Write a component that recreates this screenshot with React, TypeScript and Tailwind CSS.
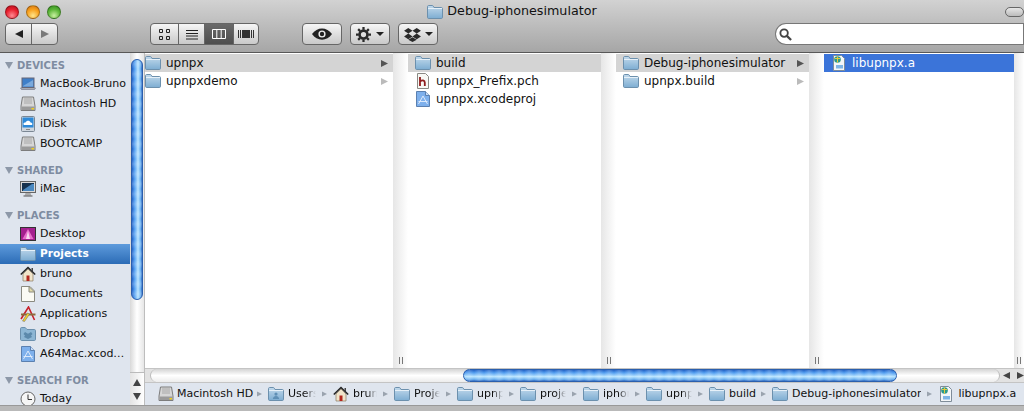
import React, { useId } from "react";

const FONT = "font-['DejaVu_Sans',sans-serif]";

function Folder({ className = "w-4 h-[14px]", person }: { className?: string; person?: boolean }) {
  const id = useId();
  return (
    <svg viewBox="0 0 16 14" className={`${className} shrink-0`}>
      <defs>
        <linearGradient id={id} x1="0" y1="0" x2="0" y2="1">
          <stop offset="0" stopColor="#c3daec" />
          <stop offset="1" stopColor="#7dadd2" />
        </linearGradient>
      </defs>
      <path d="M.5 3V1.600C.5 1 1 .5 1.600.5h3.600c.5 0 .8.2 1 .6L7 2.500h7.400c.6 0 1.100.5 1.100 1.100v8.800c0 .6-.5 1.100-1.100 1.100H1.600c-.6 0-1.100-.5-1.100-1.100z" fill={`url(#${id})`} stroke="#6c90ad" />
      <path d="M1 3.500h14" stroke="#e6f0f8" />
      {person && <path d="M8 5.500a1.600 1.600 0 110 3.200 1.600 1.600 0 010-3.200zM4.800 12c.3-2 1.600-3 3.200-3s2.900 1 3.200 3z" fill="#5f8fb5" />}
    </svg>
  );
}

function Drive() {
  return (
    <svg viewBox="0 0 16 16" className="w-4 h-4 shrink-0">
      <path d="M2.500 1h11l1.500 9v4.500H1V10z" fill="#d6d6d6" stroke="#7c7c7c" />
      <path d="M4 3h8M4 5h8M4 7h8" stroke="#a8a8a8" />
      <rect x="1.500" y="10.500" width="13" height="3.500" fill="#9a9a9a" />
      <rect x="11.500" y="12" width="2.500" height="1.500" fill="#f0d020" />
    </svg>
  );
}

function Laptop() {
  return (
    <svg viewBox="0 0 16 16" className="w-4 h-4 shrink-0">
      <rect x="2" y="2" width="12" height="9.500" fill="#3f7fc9" stroke="#667" />
      <path d="M3 10L13 4v6.500H3z" fill="#7aa9dd" />
      <path d="M.5 12h15l-1 1.500h-13z" fill="#c4c8ce" stroke="#667" strokeWidth=".6" />
    </svg>
  );
}

function IDisk() {
  return (
    <svg viewBox="0 0 16 16" className="w-4 h-4 shrink-0">
      <rect x="1.500" y=".5" width="13" height="15" rx="1" fill="#cfd6de" stroke="#7b8794" />
      <rect x="2.500" y="1.500" width="11" height="10" fill="#2f8ad8" />
      <path d="M4 9c-1.500-1.500.5-3 1.500-2.500C6.500 4 10 4 10.500 6.500 12.500 6.500 13 9 11.500 9z" fill="#fff" />
      <rect x="6" y="13" width="4" height="1" fill="#888" />
    </svg>
  );
}

function IMac() {
  return (
    <svg viewBox="0 0 16 16" className="w-4 h-4 shrink-0">
      <rect x=".5" y=".5" width="15" height="11" fill="#d9d9d9" stroke="#666" />
      <rect x="2" y="2" width="12" height="8" fill="#16324f" />
      <path d="M3 9l9-6h2v7H3z" fill="#4a88c0" />
      <path d="M5.500 12h5l.8 2.500H4.700z" fill="#aaa" />
      <rect x="3.500" y="14.500" width="9" height="1" fill="#555" />
    </svg>
  );
}

function DesktopIcon() {
  return (
    <svg viewBox="0 0 16 16" className="w-4 h-4 shrink-0">
      <rect x=".5" y="1.500" width="15" height="13" fill="#a5208f" stroke="#333" />
      <path d="M8 3l5.500 10h-11z" fill="#e86ccb" />
      <path d="M8 5l2 8H6z" fill="#f8d8f0" />
    </svg>
  );
}

function House() {
  return (
    <svg viewBox="0 0 16 16" className="w-4 h-4 shrink-0">
      <path d="M3 8v7h10V8L8 3z" fill="#f0e4ca" stroke="#8a7a60" strokeWidth=".7" />
      <path d="M.8 8.500L8 1.500l7.200 7" fill="none" stroke="#222" strokeWidth="1.500" />
      <rect x="6.500" y="9.500" width="3" height="5.500" fill="#b3261e" />
      <rect x="11.500" y="2" width="1.500" height="3" fill="#444" />
    </svg>
  );
}

function Doc() {
  return (
    <svg viewBox="0 0 16 16" className="w-4 h-4 shrink-0">
      <path d="M1.500.5h8.500l4.500 4.500v10.500h-13z" fill="#fbfbf4" stroke="#8a8a80" />
      <path d="M9 .5v5.500h5.500z" fill="#e4dca8" stroke="#8a8a80" />
    </svg>
  );
}

function Apps() {
  return (
    <svg viewBox="0 0 16 16" className="w-4 h-4 shrink-0">
      <path d="M1 13L8.500 1l6 13" fill="none" stroke="#c8202a" strokeWidth="1.600" />
      <path d="M1 8.500h14.500" stroke="#8a6a3c" strokeWidth="2" />
      <path d="M2.500 15l5-8 2 1.200-5 7.300z" fill="#f2cf2e" stroke="#666" strokeWidth=".5" />
    </svg>
  );
}

function DropboxFolder() {
  return (
    <svg viewBox="0 0 16 14" className="w-4 h-[14px] shrink-0">
      <path d="M.5 3V1.600C.5 1 1 .5 1.600.5h3.600L7 2.500h7.400c.6 0 1.100.5 1.100 1.100v8.800c0 .6-.5 1.100-1.100 1.100H1.600c-.6 0-1.100-.5-1.100-1.100z" fill="#8db6d4" stroke="#6c90ad" />
      <path d="M5 5l3 1.800L11 5l1.500 2L11 8.500l1 1.500-4 2-4-2 1-1.500L3.500 7z" fill="#5c89ab" />
    </svg>
  );
}

function Xcode() {
  return (
    <svg viewBox="0 0 16 16" className="w-4 h-4 shrink-0">
      <path d="M1.500.5h9l4 4v11h-13z" fill="#7eb0ec" stroke="#5b80b0" />
      <path d="M10.500.5v4h4" fill="#c8dcf5" stroke="#5b80b0" />
      <path d="M3.500 13L8 5l4.500 8M3.500 10.500h9" fill="none" stroke="#dce9fb" strokeWidth="1" />
    </svg>
  );
}

function HFile() {
  return (
    <svg viewBox="0 0 16 16" className="w-4 h-4 shrink-0">
      <path d="M2.500.5h8l3 3v12h-11z" fill="#f8f8f4" stroke="#8a8a84" />
      <path d="M5 4v9M5 8.500c2-1.500 4.800-1.500 4.800 1V13" fill="none" stroke="#8f1d1d" strokeWidth="1.800" />
    </svg>
  );
}

function LibFile() {
  return (
    <svg viewBox="0 0 16 16" className="w-4 h-4 shrink-0">
      <path d="M2.500.5h8l3 3v12h-11z" fill="#f4f6f8" stroke="#7f8c99" />
      <rect x="5" y="10" width="7" height="3.500" fill="#7db4e6" />
      <circle cx="6.500" cy="4.500" r="3.300" fill="#2d9a8c" />
      <path d="M6.500 1.500v6M4 3.500h5" stroke="#e6c83a" strokeWidth="1" />
    </svg>
  );
}

function Clock() {
  return (
    <svg viewBox="0 0 16 16" className="w-4 h-4 shrink-0">
      <circle cx="8" cy="8" r="7" fill="#f6f6f6" stroke="#666" />
      <path d="M8 3.500V8.500H12" fill="none" stroke="#333" strokeWidth="1" />
    </svg>
  );
}

function Triangle({ className, fill }: { className: string; fill: string }) {
  return (
    <svg viewBox="0 0 8 8" className={className}>
      <path d="M0 0L8 4L0 8z" fill={fill} />
    </svg>
  );
}

function Light({ gradient }: { gradient: string }) {
  return <div className={`w-[14px] h-[14px] rounded-full border border-black/30 ${gradient}`} />;
}

const btn =
  "h-[22px] border border-[#666] rounded-[4px] bg-gradient-to-b from-[#f6f6f6] to-[#c9c9c9] flex items-center justify-center";

function Toolbar() {
  return (
    <div className="h-[53px] shrink-0 bg-gradient-to-b from-[#d2d2d2] to-[#a6a6a6] border-b border-[#585858] flex flex-col">
      <div className="h-[23px] grid grid-cols-[1fr_auto_1fr] items-center shrink-0">
        <div className="flex gap-[7px] pl-[5px]">
          <Light gradient="bg-[radial-gradient(circle_at_50%_80%,#ff8a92,#e8202e_55%,#b00e1a)]" />
          <Light gradient="bg-[radial-gradient(circle_at_50%_80%,#ffe48a,#f8a01c_55%,#d0700e)]" />
          <Light gradient="bg-[radial-gradient(circle_at_50%_80%,#c8f0a0,#5cb638_55%,#2f8a1c)]" />
        </div>
        <div className="flex items-center gap-1 text-[12.7px] text-[#111] leading-none">
          <Folder />
          <span>Debug-iphonesimulator</span>
        </div>
        <div className="flex justify-end">
          <div className="w-[19px] h-[10px] rounded-full border border-[#666] bg-gradient-to-b from-[#e6e6e6] to-[#bbb]" />
        </div>
      </div>
      <div className="flex items-center pl-[5px]">
        <div className={`${btn} w-[53px]`}>
          <div className="w-[26px] h-full flex items-center justify-center border-r border-[#666]">
            <Triangle className="w-2 h-2 rotate-180" fill="#222" />
          </div>
          <div className="flex-1 flex items-center justify-center">
            <Triangle className="w-2 h-2" fill="#7a7a7a" />
          </div>
        </div>
        <div className={`${btn} w-[109px] ml-[92px] overflow-hidden`}>
          <div className="w-[28px] h-full flex items-center justify-center border-r border-[#666]">
            <svg viewBox="0 0 11 11" className="w-[11px] h-[11px]">
              <path d="M.5.5h3v3h-3zM7.500.5h3v3h-3zM.5 7.500h3v3h-3zM7.500 7.500h3v3h-3z" fill="none" stroke="#222" />
            </svg>
          </div>
          <div className="w-[26px] h-full flex items-center justify-center border-r border-[#666]">
            <svg viewBox="0 0 12 11" className="w-3 h-[11px]">
              <path d="M0 1.500h12M0 4.500h12M0 7h12M0 10h12" stroke="#222" />
            </svg>
          </div>
          <div className="w-[28px] h-full flex items-center justify-center bg-gradient-to-b from-[#6a6a6a] to-[#4e4e4e]">
            <svg viewBox="0 0 14 10" className="w-[14px] h-[10px]">
              <path d="M.5.500h13v9H.500zM4.800.500v9M9.200.500v9" fill="none" stroke="#fff" />
            </svg>
          </div>
          <div className="flex-1 h-full flex items-center justify-center border-l border-[#666]">
            <svg viewBox="0 0 16 10" className="w-4 h-[10px]">
              <path d="M.5 1v8M2.500 1v8M13.500 1v8M15.500 1v8" stroke="#333" />
              <rect x="4" y="1" width="8" height="8" fill="#333" />
            </svg>
          </div>
        </div>
        <div className={`${btn} w-[40px] ml-[43px]`}>
          <svg viewBox="0 0 20 12" className="w-5 h-3">
            <path d="M0 6c5-7.500 15-7.500 20 0-5 7.500-15 7.500-20 0z" fill="#222" />
            <circle cx="10" cy="6" r="3.600" fill="#eee" />
            <circle cx="10" cy="6" r="2.200" fill="#222" />
          </svg>
        </div>
        <div className={`${btn} w-[40px] ml-[8px] gap-[5px]`}>
          <svg viewBox="0 0 16 16" className="w-[15px] h-[15px]">
            <circle cx="8" cy="8" r="4.200" fill="none" stroke="#2a2a2a" strokeWidth="2.800" />
            <path d="M8 0v3M8 13v3M0 8h3M13 8h3M2.300 2.300l2.100 2.100M11.600 11.600l2.100 2.100M2.300 13.700l2.100-2.100M11.600 4.400l2.100-2.100" stroke="#2a2a2a" strokeWidth="2.400" />
          </svg>
          <svg viewBox="0 0 8 4" className="w-2 h-1"><path d="M0 0h8L4 4z" fill="#222" /></svg>
        </div>
        <div className={`${btn} w-[40px] ml-[8px] gap-[4px]`}>
          <svg viewBox="0 0 18 16" className="w-[17px] h-[15px]">
            <path d="M4.500 1L9 4 4.500 7 0 4zM13.500 1L18 4l-4.500 3L9 4zM4.500 7L9 10l-4.500 3L0 10zM13.500 7L18 10l-4.500 3L9 10z" fill="#2a2a2a" />
            <path d="M4.500 13.500L9 11l4.500 2.500L9 16z" fill="#2a2a2a" />
          </svg>
          <svg viewBox="0 0 8 4" className="w-2 h-1"><path d="M0 0h8L4 4z" fill="#222" /></svg>
        </div>
        <div className="ml-auto w-[249px] h-[22px] rounded-l-full rounded-r-[10px] bg-white border border-[#777] flex items-center pl-[3px]">
          <svg viewBox="0 0 14 14" className="w-[13px] h-[13px]">
            <circle cx="5.500" cy="5.500" r="4" fill="none" stroke="#444" strokeWidth="2" />
            <path d="M8.500 8.500L13 13" stroke="#444" strokeWidth="2.400" />
          </svg>
        </div>
      </div>
    </div>
  );
}

function SidebarHeader({ label, className = "" }: { label: string; className?: string }) {
  return (
    <div className={`h-[18px] flex items-center pl-[5px] gap-[4px] font-bold text-[10px] text-[#7e8ca1] ${className}`}>
      <svg viewBox="0 0 8 7" className="w-[8px] h-[7px]"><path d="M0 0h8L4 7z" fill="#8d98a8" /></svg>
      <span>{label}</span>
    </div>
  );
}

function SidebarRow({ icon, label, selected }: { icon: React.ReactNode; label: string; selected?: boolean }) {
  return (
    <div
      className={`h-5 flex items-center pl-[20px] gap-1 whitespace-nowrap ${
        selected ? "bg-gradient-to-b from-[#5e9bdc] to-[#2b6cb6] text-white font-bold text-[10.6px]" : "text-[#111] text-[11px]"
      }`}
    >
      {icon}
      <span>{label}</span>
    </div>
  );
}

const aqua =
  "bg-[repeating-linear-gradient(0deg,rgba(255,255,255,0)_0px,rgba(255,255,255,0.2)_5px,rgba(255,255,255,0)_10px),linear-gradient(90deg,#1f5fc4,#4f9cf0_25%,#b8e4ff_60%,#6ab0f0_85%,#2a66c0)]";
const aquaH =
  "bg-[repeating-linear-gradient(90deg,rgba(255,255,255,0)_0px,rgba(255,255,255,0.2)_5px,rgba(255,255,255,0)_10px),linear-gradient(180deg,#1f5fc4,#4f9cf0_25%,#b8e4ff_60%,#6ab0f0_85%,#2a66c0)]";

function Sidebar() {
  return (
    <div className="w-[145px] shrink-0 flex overflow-hidden border-r border-[#bdbdbd]">
      <div className="w-[130px] shrink-0 bg-[#dfe5ee] pt-[3px] overflow-hidden">
        <SidebarHeader label="DEVICES" />
        <SidebarRow icon={<Laptop />} label="MacBook-Bruno" />
        <SidebarRow icon={<Drive />} label="Macintosh HD" />
        <SidebarRow icon={<IDisk />} label="iDisk" />
        <SidebarRow icon={<Drive />} label="BOOTCAMP" />
        <SidebarHeader label="SHARED" className="mt-[7px]" />
        <SidebarRow icon={<IMac />} label="iMac" />
        <SidebarHeader label="PLACES" className="mt-[7px]" />
        <SidebarRow icon={<DesktopIcon />} label="Desktop" />
        <SidebarRow icon={<Folder />} label="Projects" selected />
        <SidebarRow icon={<House />} label="bruno" />
        <SidebarRow icon={<Doc />} label="Documents" />
        <SidebarRow icon={<Apps />} label="Applications" />
        <SidebarRow icon={<DropboxFolder />} label="Dropbox" />
        <SidebarRow icon={<Xcode />} label="A64Mac.xcod…" />
        <SidebarHeader label="SEARCH FOR" className="mt-[7px]" />
        <SidebarRow icon={<Clock />} label="Today" />
      </div>
      <div className="flex-1 flex flex-col bg-gradient-to-r from-[#d8d8d8] via-white to-[#e6e6e6]">
        <div className="flex-1 pt-[6px]">
          <div className={`w-[12px] ml-[1px] h-[241px] rounded-full border border-[#2a5fae] ${aqua}`} />
        </div>
        <div className="h-[33px] flex flex-col items-center justify-center gap-[7px] border-t border-[#bbb] bg-gradient-to-r from-[#e4e4e4] to-white">
          <svg viewBox="0 0 8 7" className="w-2 h-[7px]"><path d="M4 0l4 7H0z" fill="#444" /></svg>
          <svg viewBox="0 0 8 7" className="w-2 h-[7px]"><path d="M0 0h8L4 7z" fill="#444" /></svg>
        </div>
      </div>
    </div>
  );
}

function ColRow({ icon, label, state, chevron, className = "" }: { icon: React.ReactNode; label: string; state?: "gray" | "blue"; chevron?: "dark" | "light"; className?: string }) {
  const bg = state === "gray" ? "bg-[#d4d4d4] text-[#111]" : state === "blue" ? "bg-[#3b74d9] text-white" : "text-[#111]";
  return (
    <div className={`h-[18px] flex items-center gap-[5px] pr-[5px] text-[12px] ${bg} ${className}`}>
      {icon}
      <span className="flex-1 whitespace-nowrap">{label}</span>
      {chevron && <Triangle className="w-[7px] h-[7px]" fill={chevron === "dark" ? "#555" : "#bbb"} />}
    </div>
  );
}

function Divider({ width = "w-[15px]" }: { width?: string }) {
  return (
    <div className={`${width} shrink-0 flex flex-col justify-end items-center pb-1 bg-gradient-to-r from-[#e6e6e6] to-white`}>
      <div className="w-1 h-[7px] border-x border-[#777]" />
    </div>
  );
}

function Columns() {
  return (
    <div className="flex-1 min-h-0 flex bg-white">
      <div className="w-[248px] shrink-0 pt-px">
        <ColRow icon={<Folder />} label="upnpx" state="gray" chevron="dark" />
        <ColRow icon={<Folder />} label="upnpxdemo" chevron="light" />
      </div>
      <Divider />
      <div className="w-[193px] shrink-0 pt-px">
        <ColRow icon={<Folder />} label="build" state="gray" className="pl-[7px]" />
        <ColRow icon={<HFile />} label="upnpx_Prefix.pch" className="pl-[7px]" />
        <ColRow icon={<Xcode />} label="upnpx.xcodeproj" className="pl-[7px]" />
      </div>
      <Divider />
      <div className="w-[193px] shrink-0 pt-px">
        <ColRow icon={<Folder />} label="Debug-iphonesimulator" state="gray" chevron="dark" className="pl-[7px]" />
        <ColRow icon={<Folder />} label="upnpx.build" chevron="light" className="pl-[7px]" />
      </div>
      <Divider />
      <div className="w-[190px] shrink-0 pt-px">
        <ColRow icon={<LibFile />} label="libupnpx.a" state="blue" className="pl-[7px]" />
      </div>
      <Divider width="w-[10px]" />
    </div>
  );
}

function HScroll() {
  return (
    <div className="h-[15px] shrink-0 flex bg-[#e2e2e2] border-y border-[#c4c4c4] pl-[5px]">
      <div className="flex-1 flex rounded-full bg-gradient-to-b from-[#d4d4d4] via-white to-[#ececec] border-x border-[#bbb] pl-[312px]">
        <div className={`w-[434px] h-[13px] rounded-full border border-[#2a5fae] ${aquaH}`} />
      </div>
      <div className="w-[24px] shrink-0 flex items-center justify-end gap-[7px]">
        <Triangle className="w-[7px] h-[7px] rotate-180" fill="#444" />
        <Triangle className="w-[7px] h-[7px]" fill="#444" />
      </div>
    </div>
  );
}

function PathSep() {
  return <Triangle className="w-[5px] h-[6px] ml-[6px] mr-[6px] shrink-0" fill="#9aa3ae" />;
}

function PathItem({ icon, label, fade }: { icon: React.ReactNode; label: string; fade?: string }) {
  return (
    <>
      {icon}
      <span
        className={`ml-1 whitespace-nowrap overflow-hidden shrink-0 ${
          fade ? `${fade} [mask-image:linear-gradient(90deg,#000_60%,transparent)]` : ""
        }`}
      >
        {label}
      </span>
    </>
  );
}

function PathBar() {
  return (
    <div className="h-[22px] shrink-0 bg-[#dfe5ee] flex items-center pl-[13px] text-[11px] text-[#111] overflow-hidden">
      <Drive />
      <span className="ml-[3px] w-[74px] shrink-0 whitespace-nowrap">Macintosh HD</span>
      <PathSep />
      <PathItem icon={<Folder person />} label="Users" fade="w-[28px]" />
      <PathSep />
      <PathItem icon={<House />} label="bruno" fade="w-[24px]" />
      <PathSep />
      <PathItem icon={<Folder />} label="Projects" fade="w-[26px]" />
      <PathSep />
      <PathItem icon={<Folder />} label="upnpx" fade="w-[26px]" />
      <PathSep />
      <PathItem icon={<Folder />} label="projects" fade="w-[26px]" />
      <PathSep />
      <PathItem icon={<Folder />} label="iphone" fade="w-[26px]" />
      <PathSep />
      <PathItem icon={<Folder />} label="upnpx" fade="w-[26px]" />
      <PathSep />
      <Folder />
      <span className="ml-1 w-[26px] shrink-0 whitespace-nowrap">build</span>
      <PathSep />
      <PathItem icon={<Folder />} label="Debug-iphonesimulator" />
      <PathSep />
      <PathItem icon={<LibFile />} label="libupnpx.a" />
    </div>
  );
}

export default function App() {
  return (
    <div className={`w-[1024px] h-[411px] overflow-hidden flex flex-col bg-[#b8b8b8] ${FONT}`}>
      <Toolbar />
      <div className="h-[352px] shrink-0 flex">
        <Sidebar />
        <div className="flex-1 min-w-0 flex flex-col">
          <Columns />
          <HScroll />
          <PathBar />
        </div>
      </div>
      <div className="flex-1 border-t border-[#999] bg-[#b9b9b9]" />
    </div>
  );
}
